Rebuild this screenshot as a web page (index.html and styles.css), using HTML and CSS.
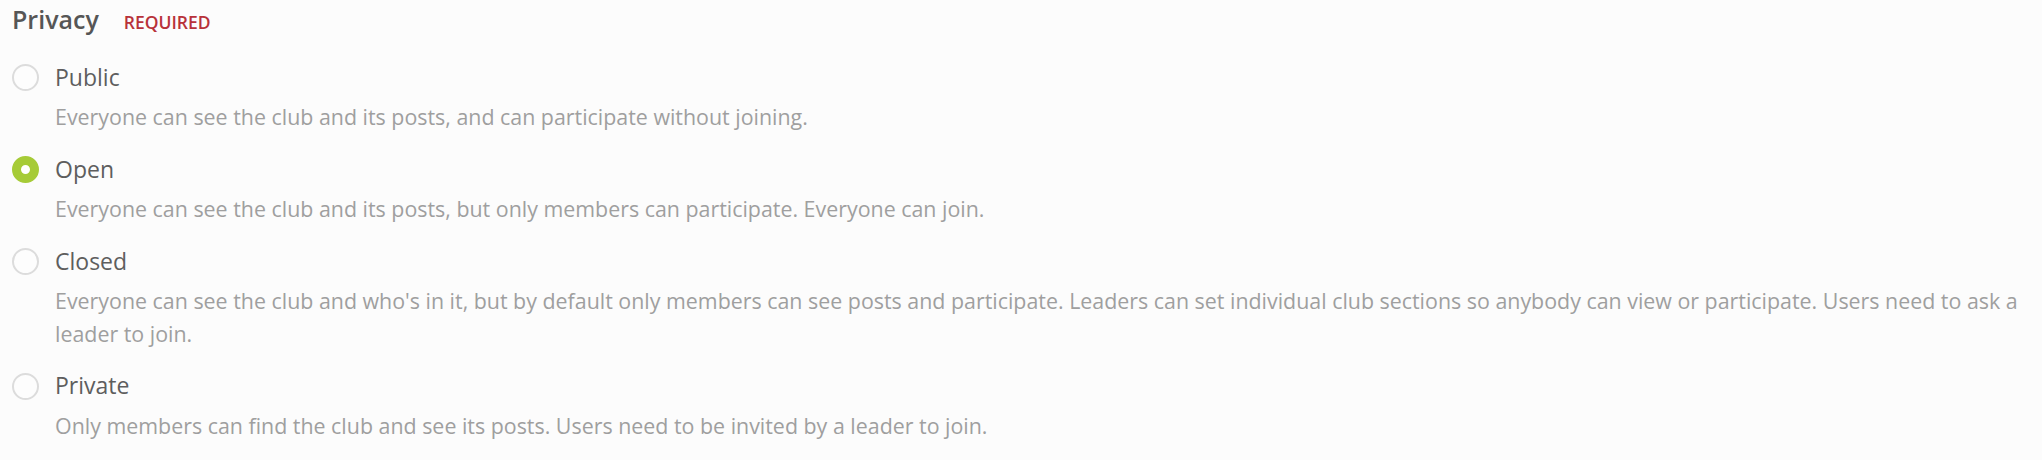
FILE: index.html
```html
<!DOCTYPE html>
<html lang="en">
<head>
<meta charset="utf-8">
<title>Privacy</title>
<link rel="stylesheet" href="styles.css">
</head>
<body>
<section class="field">
  <div class="field-head">
    <span class="field-title">Privacy</span>
    <span class="field-required">REQUIRED</span>
  </div>
  <div class="options">
    <label class="option">
      <span class="radio"></span>
      <span class="option-label">Public</span>
      <span class="option-desc">Everyone can see the club and its posts, and can participate without joining.</span>
    </label>
    <label class="option">
      <span class="radio radio-checked"></span>
      <span class="option-label">Open</span>
      <span class="option-desc">Everyone can see the club and its posts, but only members can participate. Everyone can join.</span>
    </label>
    <label class="option">
      <span class="radio"></span>
      <span class="option-label">Closed</span>
      <span class="option-desc">Everyone can see the club and who's in it, but by default only members can see posts and participate. Leaders can set individual club sections so anybody can view or participate. Users need to ask a leader to join.</span>
    </label>
    <label class="option">
      <span class="radio"></span>
      <span class="option-label">Private</span>
      <span class="option-desc">Only members can find the club and see its posts. Users need to be invited by a leader to join.</span>
    </label>
  </div>
</section>
</body>
</html>
```

FILE: styles.css
```css
html, body {
  margin: 0;
  padding: 0;
  background: #fcfcfc;
}

body {
  font-family: "Open Sans", "Liberation Sans", sans-serif;
  width: 2042px;
  height: 460px;
  overflow: hidden;
}

.field {
  padding: 2px 8px 0 12px;
}

.field-head {
  display: flex;
  align-items: baseline;
  gap: 25px;
  height: 34px;
}

.field-title {
  font-size: 25px;
  line-height: 34px;
  font-weight: 600;
  color: #565656;
}

.field-required {
  font-size: 17.5px;
  line-height: 34px;
  font-weight: 600;
  color: #b8323a;
}

.options {
  display: flex;
  flex-direction: column;
  gap: 20.5px;
  padding-top: 26px;
}

.option {
  display: grid;
  grid-template-columns: 27px 1fr;
  column-gap: 16px;
  row-gap: 10px;
  align-items: center;
}

.radio {
  box-sizing: border-box;
  width: 27px;
  height: 27px;
  border-radius: 50%;
  border: 2px solid #dcdcdc;
  background: #fdfdfd;
  grid-row: 1;
  grid-column: 1;
  margin-top: 2px;
}

.radio-checked {
  border: 9px solid #a6cb37;
  background: #ffffff;
}

.option-label {
  grid-row: 1;
  grid-column: 2;
  font-size: 23px;
  line-height: 28px;
  color: #5e5e5e;
}

.option-desc {
  grid-row: 2;
  grid-column: 2;
  font-size: 21.4px;
  line-height: 32.5px;
  color: #9f9f9f;
}
```
